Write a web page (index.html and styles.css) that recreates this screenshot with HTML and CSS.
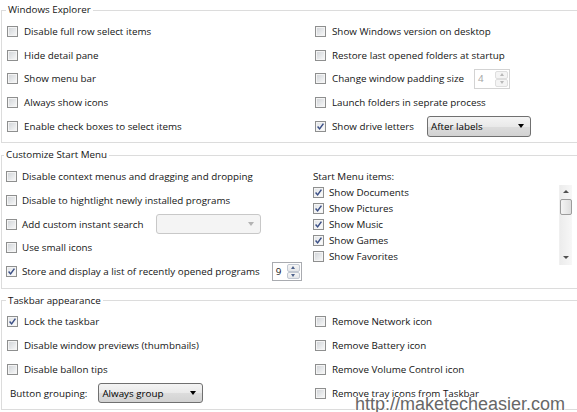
FILE: index.html
```html
<!DOCTYPE html>
<html>
<head>
<meta charset="utf-8">
<title>Tweaks</title>
<link rel="stylesheet" href="styles.css">
</head>
<body>
<div class="page">

  <fieldset class="group g1">
    <legend>Windows Explorer</legend>
    <div class="cols">
      <div class="col left">
        <div class="row"><span class="cb"></span><span>Disable full row select items</span></div>
        <div class="row"><span class="cb"></span><span>Hide detail pane</span></div>
        <div class="row"><span class="cb"></span><span>Show menu bar</span></div>
        <div class="row"><span class="cb"></span><span>Always show icons</span></div>
        <div class="row"><span class="cb"></span><span>Enable check boxes to select items</span></div>
      </div>
      <div class="col right">
        <div class="row"><span class="cb"></span><span>Show Windows version on desktop</span></div>
        <div class="row"><span class="cb"></span><span>Restore last opened folders at startup</span></div>
        <div class="row"><span class="cb"></span><span>Change window padding size</span>
          <span class="spin dis sp-pad"><span class="val">4</span><span class="btns"><span class="sbtn"><i class="up"></i></span><span class="sbtn"><i class="dn"></i></span></span></span>
        </div>
        <div class="row"><span class="cb"></span><span>Launch folders in seprate process</span></div>
        <div class="row"><span class="cb on"><svg viewBox="0 0 9 9" width="9" height="9"><path d="M1.6 4.6 L3.6 6.9 L7.4 1.6" fill="none" stroke="#3b4f86" stroke-width="1.5"/></svg></span><span>Show drive letters</span>
          <span class="combo cm-drive"><span>After labels</span><i class="arrow"></i></span>
        </div>
      </div>
    </div>
  </fieldset>

  <fieldset class="group g2">
    <legend>Customize Start Menu</legend>
    <div class="cols">
      <div class="col left">
        <div class="row"><span class="cb"></span><span>Disable context menus and dragging and dropping</span></div>
        <div class="row"><span class="cb"></span><span>Disable to hightlight newly installed programs</span></div>
        <div class="row"><span class="cb"></span><span>Add custom instant search</span>
          <span class="combo dis cm-search"><span></span><i class="arrow"></i></span>
        </div>
        <div class="row"><span class="cb"></span><span>Use small icons</span></div>
        <div class="row"><span class="cb on"><svg viewBox="0 0 9 9" width="9" height="9"><path d="M1.6 4.6 L3.6 6.9 L7.4 1.6" fill="none" stroke="#3b4f86" stroke-width="1.5"/></svg></span><span>Store and display a list of recently opened programs</span>
          <span class="spin sp-recent"><span class="val">9</span><span class="btns"><span class="sbtn"><i class="up"></i></span><span class="sbtn"><i class="dn"></i></span></span></span>
        </div>
      </div>
      <div class="col right">
        <div class="lbl">Start Menu items:</div>
        <div class="list">
          <div class="items">
            <div class="li"><span class="cb on"><svg viewBox="0 0 9 9" width="9" height="9"><path d="M1.6 4.6 L3.6 6.9 L7.4 1.6" fill="none" stroke="#3b4f86" stroke-width="1.5"/></svg></span><span>Show Documents</span></div>
            <div class="li"><span class="cb on"><svg viewBox="0 0 9 9" width="9" height="9"><path d="M1.6 4.6 L3.6 6.9 L7.4 1.6" fill="none" stroke="#3b4f86" stroke-width="1.5"/></svg></span><span>Show Pictures</span></div>
            <div class="li"><span class="cb on"><svg viewBox="0 0 9 9" width="9" height="9"><path d="M1.6 4.6 L3.6 6.9 L7.4 1.6" fill="none" stroke="#3b4f86" stroke-width="1.5"/></svg></span><span>Show Music</span></div>
            <div class="li"><span class="cb on"><svg viewBox="0 0 9 9" width="9" height="9"><path d="M1.6 4.6 L3.6 6.9 L7.4 1.6" fill="none" stroke="#3b4f86" stroke-width="1.5"/></svg></span><span>Show Games</span></div>
            <div class="li"><span class="cb"></span><span>Show Favorites</span></div>
          </div>
          <div class="sb">
            <div class="sb-btn"><i class="sb-up"></i></div>
            <div class="sb-thumb"></div>
            <div class="sb-track"></div>
            <div class="sb-btn"><i class="sb-dn"></i></div>
          </div>
        </div>
      </div>
    </div>
  </fieldset>

  <fieldset class="group g3">
    <legend>Taskbar appearance</legend>
    <div class="cols">
      <div class="col left">
        <div class="row"><span class="cb on"><svg viewBox="0 0 9 9" width="9" height="9"><path d="M1.6 4.6 L3.6 6.9 L7.4 1.6" fill="none" stroke="#3b4f86" stroke-width="1.5"/></svg></span><span>Lock the taskbar</span></div>
        <div class="row"><span class="cb"></span><span>Disable window previews (thumbnails)</span></div>
        <div class="row"><span class="cb"></span><span>Disable ballon tips</span></div>
        <div class="row"><span class="plain">Button grouping:</span>
          <span class="combo cm-group"><span>Always group</span><i class="arrow"></i></span>
        </div>
      </div>
      <div class="col right">
        <div class="row"><span class="cb"></span><span>Remove Network icon</span></div>
        <div class="row"><span class="cb"></span><span>Remove Battery icon</span></div>
        <div class="row"><span class="cb"></span><span>Remove Volume Control icon</span></div>
        <div class="row"><span class="cb"></span><span>Remove tray icons from Taskbar</span></div>
      </div>
    </div>
  </fieldset>

</div>
<div class="wm">http://maketecheasier.com</div>
</body>
</html>
```
FILE: styles.css
```css
* { box-sizing: border-box; }

html, body {
  margin: 0;
  padding: 0;
  background: #fff;
}

body {
  width: 577px;
  height: 412px;
  overflow: hidden;
  position: relative;
  font-family: "Open Sans", "Noto Sans", sans-serif;
  font-size: 9.8px;
  color: #141414;
}

.page {
  width: 577px;
  padding-top: 2px;
}

.group {
  margin: 4px 0 0 1px;
  padding: 0 0 4px 0;
  border: 1px solid #dcdcdc;
  border-right: none;
  min-width: 0;
}

.g1 { margin-top: 0; }

legend {
  margin-left: 4px;
  padding: 0 2px;
  height: 16px;
  line-height: 16px;
}

.g2 legend { margin-left: 2px; }

.cols {
  display: grid;
  grid-template-columns: 313px 1fr;
  padding-top: 1.5px;
}

.g2 .cols { grid-template-columns: 311px 1fr; }

.col.left { padding-left: 5px; }
.g2 .col.left { padding-left: 4px; }

.row {
  height: 23.75px;
  display: flex;
  align-items: center;
  white-space: nowrap;
}

/* checkbox */
.cb {
  position: relative;
  flex: none;
  width: 11px;
  height: 11px;
  margin-right: 6px;
  border: 1px solid #8e8f8f;
  background: linear-gradient(135deg, #cfd2d6 0%, #e6e8ea 55%, #fafafa 100%);
  box-shadow: inset 0 0 0 1px #f4f4f4;
}

.g2 .left .cb { margin-right: 5px; }

.cb.on {
  background: linear-gradient(135deg, #dfe2e6 0%, #f2f3f4 60%, #ffffff 100%);
}

.cb svg {
  position: absolute;
  left: 0;
  top: 0;
}

.plain { margin-left: 3px; }

/* spinner */
.spin {
  display: flex;
  height: 20px;
  border: 1px solid #a9abb0;
  background: #fff;
}

.spin .val {
  flex: 1;
  padding-left: 3px;
  line-height: 18px;
}

.spin .btns {
  width: 14px;
  display: flex;
  flex-direction: column;
  padding: 1px 1px 1px 0;
}

.sbtn {
  flex: 1;
  display: flex;
  align-items: center;
  justify-content: center;
  border: 1px solid #c2c8d2;
  border-radius: 2px;
  background: linear-gradient(#f6f6f6, #e4e6e9);
}

.up, .dn {
  width: 0;
  height: 0;
  border-left: 2.5px solid transparent;
  border-right: 2.5px solid transparent;
}
.up { border-bottom: 3px solid #4e628c; }
.dn { border-top: 3px solid #4e628c; }

.spin.dis { border-color: #d3d3d3; }
.spin.dis .val { color: #a3a3a3; }
.spin.dis .sbtn { border-color: #dedede; background: #f4f4f4; }
.spin.dis .up { border-bottom-color: #b8b8b8; }
.spin.dis .dn { border-top-color: #b8b8b8; }

.sp-pad { width: 36px; margin-left: 10px; }
.sp-recent { width: 30px; height: 19px; margin-left: 12px; }

/* combo box */
.combo {
  display: flex;
  align-items: center;
  justify-content: space-between;
  width: 104px;
  height: 21px;
  padding: 0 6px 0 3px;
  border: 1px solid #707070;
  border-radius: 3px;
  background: linear-gradient(#f4f4f4 0%, #e9e9e9 50%, #dcdcdc 51%, #d2d2d2 100%);
  color: #000;
}

.arrow {
  width: 0;
  height: 0;
  border-left: 3.5px solid transparent;
  border-right: 3.5px solid transparent;
  border-top: 4px solid #000;
}

.combo.dis {
  border-color: #c8c8c8;
  background: #f4f4f4;
}
.combo.dis .arrow { border-top-color: #b3b3b3; }

.cm-drive { margin-left: 13px; }
.cm-search { width: 105px; height: 20px; margin-left: 12px; }
.cm-group { width: 105px; height: 20px; margin-left: 11px; }

/* start menu list */
.col.right .lbl {
  margin-top: 4px;
  height: 16px;
  line-height: 16px;
}

.list {
  display: flex;
  width: 259px;
  height: 80px;
}

.items { flex: 1; }

.li {
  height: 16px;
  display: flex;
  align-items: center;
  white-space: nowrap;
}

.li .cb { margin-right: 5px; }

.sb {
  width: 13px;
  display: flex;
  flex-direction: column;
  background: linear-gradient(90deg, #ececec, #f7f7f7);
  border-left: 1px solid #f0f0f0;
}

.sb-btn {
  height: 14px;
  display: flex;
  align-items: center;
  justify-content: center;
}

.sb-up, .sb-dn {
  width: 0;
  height: 0;
  border-left: 3px solid transparent;
  border-right: 3px solid transparent;
}
.sb-up { border-bottom: 3px solid #505050; }
.sb-dn { border-top: 3px solid #505050; }

.sb-thumb {
  height: 16px;
  border: 1px solid #9c9c9c;
  border-radius: 2px;
  background: linear-gradient(90deg, #f4f4f4, #dedede);
}

.sb-track { flex: 1; }

/* watermark overlay */
.wm {
  position: absolute;
  left: 355px;
  top: 395px;
  font-family: "Liberation Sans", Arial, sans-serif;
  font-size: 18px;
  line-height: 18px;
  color: #676767;
  white-space: nowrap;
  text-shadow: 1px 0 #fff, -1px 0 #fff, 0 1px #fff, 0 -1px #fff;
}
```
